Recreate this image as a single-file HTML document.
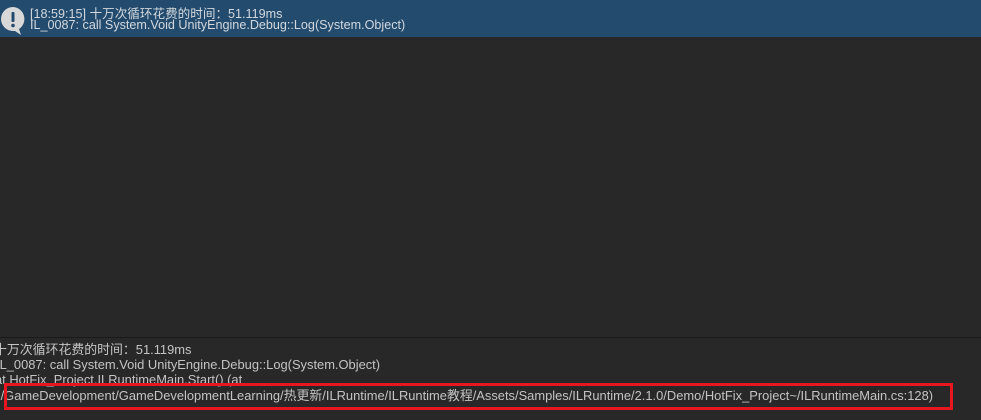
<!DOCTYPE html>
<html><head><meta charset="utf-8"><style>
body{margin:0;width:981px;height:420px;overflow:hidden;background:#282828;font-family:"Liberation Sans","Noto Sans CJK SC",sans-serif;font-size:12.9px;color:#c4c4c4;position:relative}
.hdr{position:absolute;left:0;top:0;width:981px;height:37px;background:#234b6e}
.hdr .t{position:absolute;left:30px;white-space:nowrap;color:#d2d8de;font-size:12.6px}
.sep{position:absolute;left:0;top:337px;width:981px;height:1px;background:#1a1a1a}
.l{position:absolute;white-space:nowrap;line-height:15px}
.box{position:absolute;left:4px;top:383px;width:943px;height:21px;border:3px solid #e8161f}
</style></head><body>
<div class="hdr">
<svg style="position:absolute;left:0;top:5px" width="28" height="30" viewBox="0 0 28 30"><path d="M13 2a12 12 0 1 0 0 24h2l6 4-2-6a12 12 0 0 0-6-22z" fill="#d8d8d8"/><rect x="11.5" y="7" width="3" height="10" rx="1" fill="#234b6e"/><circle cx="13" cy="20.5" r="1.8" fill="#234b6e"/></svg>
<div class="t" style="top:3px">[18:59:15] 十万次循环花费的时间：51.119ms</div>
<div class="t" style="top:18px">IL_0087: call System.Void UnityEngine.Debug::Log(System.Object)</div>
</div>
<div class="sep"></div>
<div class="l" style="left:-6px;top:342px">十万次循环花费的时间：51.119ms</div>
<div class="l" style="left:-4px;top:357px">IL_0087: call System.Void UnityEngine.Debug::Log(System.Object)</div>
<div class="l" style="left:-5px;top:372px">at HotFix_Project.ILRuntimeMain.Start() (at</div>
<div class="l" style="left:-3px;top:388px">:/GameDevelopment/GameDevelopmentLearning/热更新/ILRuntime/ILRuntime教程/Assets/Samples/ILRuntime/2.1.0/Demo/HotFix_Project~/ILRuntimeMain.cs:128)</div>
<div class="box"></div>
</body></html>
